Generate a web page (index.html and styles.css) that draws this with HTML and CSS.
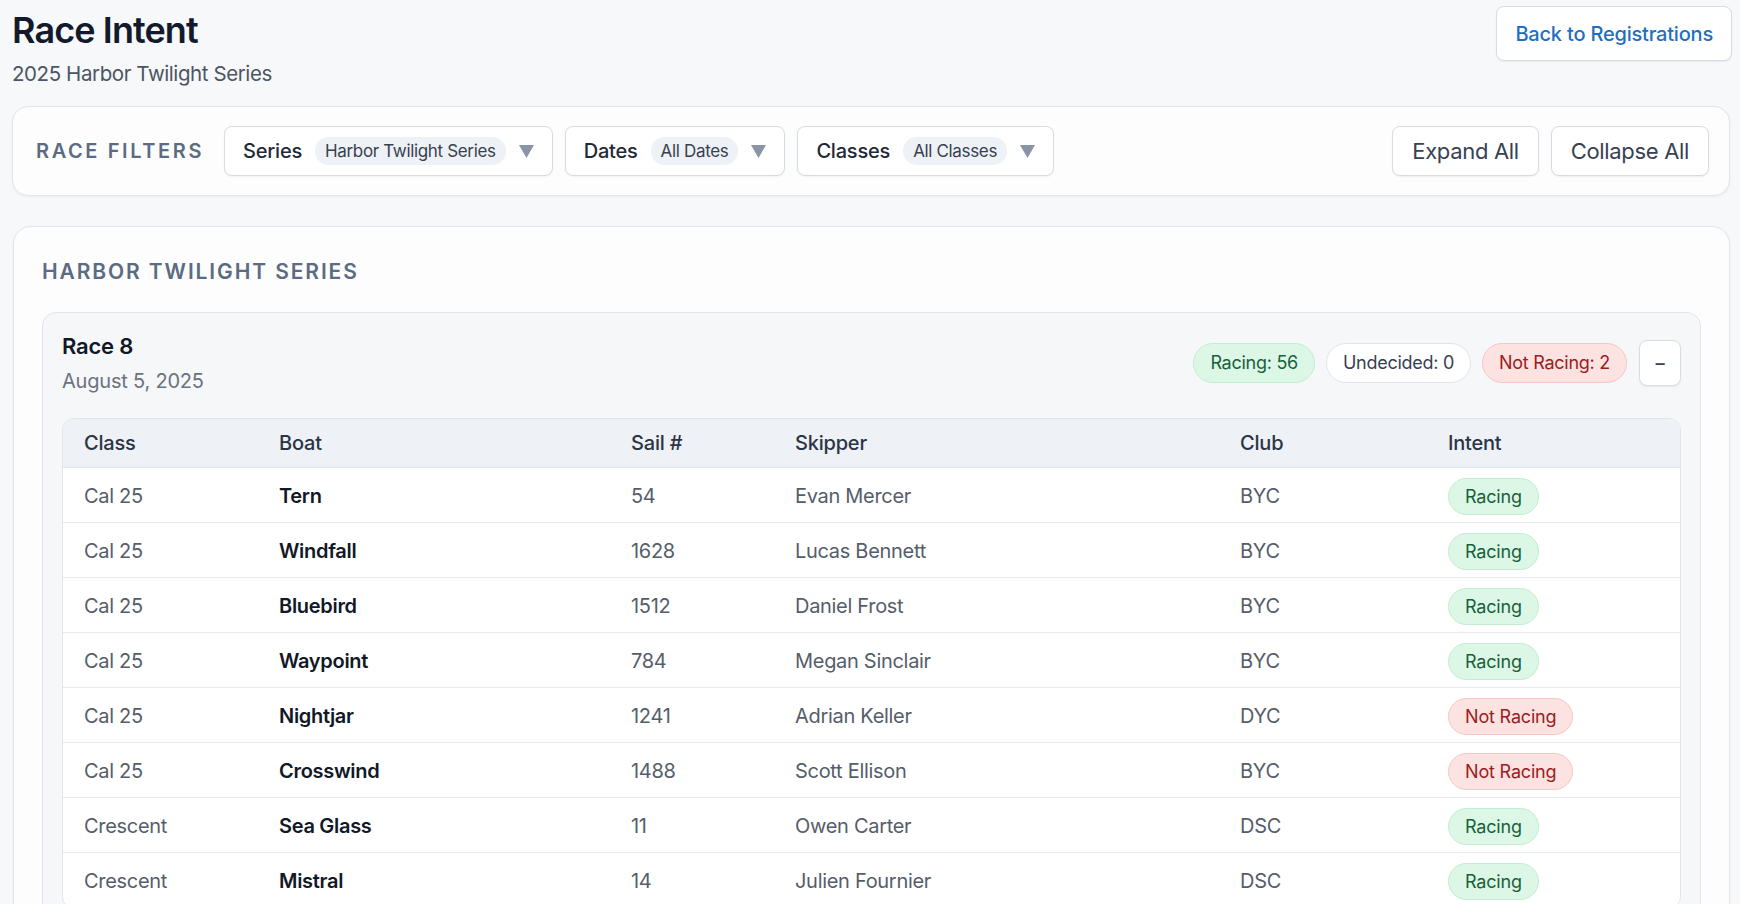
FILE: index.html
```html
<!DOCTYPE html>
<html lang="en">
<head>
  <meta charset="UTF-8">
  <meta name="viewport" content="width=device-width, initial-scale=1.0">
  <title>Race Intent</title>
  <link rel="stylesheet" href="styles.css">
</head>
<body>
  <header class="page-head">
    <div class="page-title">
      <h1>Race Intent</h1>
      <p class="subtitle">2025 Harbor Twilight Series</p>
    </div>
    <button class="btn btn-link">Back to Registrations</button>
  </header>

  <section class="filters">
    <span class="filters-label">Race Filters</span>
    <div class="select">
      <span class="select-label">Series</span>
      <span class="select-value">Harbor Twilight Series</span>
      <svg class="caret" width="15" height="13" viewBox="0 0 15 13"><polygon points="0,0 15,0 7.5,13" /></svg>
    </div>
    <div class="select">
      <span class="select-label">Dates</span>
      <span class="select-value">All Dates</span>
      <svg class="caret" width="15" height="13" viewBox="0 0 15 13"><polygon points="0,0 15,0 7.5,13" /></svg>
    </div>
    <div class="select">
      <span class="select-label">Classes</span>
      <span class="select-value">All Classes</span>
      <svg class="caret" width="15" height="13" viewBox="0 0 15 13"><polygon points="0,0 15,0 7.5,13" /></svg>
    </div>
    <div class="filters-actions">
      <button class="btn btn-plain">Expand All</button>
      <button class="btn btn-plain">Collapse All</button>
    </div>
  </section>

  <section class="series">
    <h2 class="series-title">Harbor Twilight Series</h2>

    <div class="race">
      <div class="race-head">
        <div>
          <div class="race-name">Race 8</div>
          <div class="race-date">August 5, 2025</div>
        </div>
        <div class="race-stats">
          <span class="pill pill-racing">Racing: 56</span>
          <span class="pill pill-undecided">Undecided: 0</span>
          <span class="pill pill-not">Not Racing: 2</span>
          <button class="btn btn-toggle">&minus;</button>
        </div>
      </div>

      <div class="table-wrap">
        <table class="entries">
          <colgroup>
            <col class="c-class">
            <col class="c-boat">
            <col class="c-sail">
            <col class="c-skipper">
            <col class="c-club">
            <col>
          </colgroup>
          <thead>
            <tr><th>Class</th><th>Boat</th><th>Sail #</th><th>Skipper</th><th>Club</th><th>Intent</th></tr>
          </thead>
          <tbody>
            <tr><td>Cal 25</td><td class="boat">Tern</td><td>54</td><td>Evan Mercer</td><td>BYC</td><td><span class="badge badge-racing">Racing</span></td></tr>
            <tr><td>Cal 25</td><td class="boat">Windfall</td><td>1628</td><td>Lucas Bennett</td><td>BYC</td><td><span class="badge badge-racing">Racing</span></td></tr>
            <tr><td>Cal 25</td><td class="boat">Bluebird</td><td>1512</td><td>Daniel Frost</td><td>BYC</td><td><span class="badge badge-racing">Racing</span></td></tr>
            <tr><td>Cal 25</td><td class="boat">Waypoint</td><td>784</td><td>Megan Sinclair</td><td>BYC</td><td><span class="badge badge-racing">Racing</span></td></tr>
            <tr><td>Cal 25</td><td class="boat">Nightjar</td><td>1241</td><td>Adrian Keller</td><td>DYC</td><td><span class="badge badge-not">Not Racing</span></td></tr>
            <tr><td>Cal 25</td><td class="boat">Crosswind</td><td>1488</td><td>Scott Ellison</td><td>BYC</td><td><span class="badge badge-not">Not Racing</span></td></tr>
            <tr><td>Crescent</td><td class="boat">Sea Glass</td><td>11</td><td>Owen Carter</td><td>DSC</td><td><span class="badge badge-racing">Racing</span></td></tr>
            <tr><td>Crescent</td><td class="boat">Mistral</td><td>14</td><td>Julien Fournier</td><td>DSC</td><td><span class="badge badge-racing">Racing</span></td></tr>
          </tbody>
        </table>
      </div>
    </div>
  </section>
</body>
</html>
```

FILE: styles.css
```css
body {
  margin: 0;
  padding: 0 10px 0 12px;
  background: #f7f8fa;
  color: #1f2937;
  font-family: Inter, "Noto Sans", sans-serif;
}

button {
  font-family: inherit;
  cursor: pointer;
}

.page-head {
  display: flex;
  justify-content: space-between;
  align-items: flex-start;
}
.page-title {
  padding-top: 9px;
}
h1 {
  margin: 0;
  font-size: 36px;
  line-height: 42px;
  font-weight: 600;
  letter-spacing: -0.025em;
  color: #121a2b;
}
.subtitle {
  margin: 9px 0 0;
  font-size: 20.5px;
  line-height: 28px;
  color: #4b5563;
  letter-spacing: -0.02em;
}

.btn {
  background: #fff;
  border: 1px solid #d7dce4;
  border-radius: 8px;
  box-shadow: 0 1px 2px rgba(16, 24, 40, 0.06);
}
.btn-link {
  margin: 6px -2px 0 0;
  height: 55px;
  padding: 0 18px;
  font-size: 20px;
  font-weight: 500;
  color: #1f6fbf;
  letter-spacing: -0.01em;
}
.btn-plain {
  height: 50px;
  padding: 0 19px;
  font-size: 22px;
  color: #374151;
  letter-spacing: -0.015em;
}

.filters {
  margin-top: 18px;
  display: flex;
  align-items: center;
  gap: 12px;
  padding: 19px 20px 19px 23px;
  background: #fdfdfe;
  border: 1px solid #e1e5eb;
  border-radius: 16px;
  box-shadow: 0 1px 3px rgba(16, 24, 40, 0.05);
}
.filters-label {
  margin-right: 8px;
  font-size: 20px;
  font-weight: 600;
  letter-spacing: 0.13em;
  text-transform: uppercase;
  color: #5b6b82;
}
.select {
  height: 50px;
  box-sizing: border-box;
  display: flex;
  align-items: center;
  gap: 13px;
  padding: 0 18px;
  background: #fff;
  border: 1px solid #d7dce4;
  border-radius: 8px;
  box-shadow: 0 1px 2px rgba(16, 24, 40, 0.05);
}
.select-label {
  font-size: 20px;
  font-weight: 500;
  color: #1f2937;
  letter-spacing: -0.01em;
}
.select-value {
  height: 28px;
  line-height: 28px;
  padding: 0 10px;
  border-radius: 14px;
  background: #eef1f5;
  font-size: 17px;
  color: #374151;
  letter-spacing: -0.02em;
}
.caret {
  fill: #8a94a6;
}
.filters-actions {
  margin-left: auto;
  display: flex;
  gap: 12px;
}

.series {
  margin: 30px 0 0 1px;
  padding: 32px 28px 28px;
  background: #fdfdfe;
  border: 1px solid #e2e6ec;
  border-radius: 18px;
  box-shadow: 0 1px 3px rgba(16, 24, 40, 0.05);
}
.series-title {
  margin: 0 0 27px;
  font-size: 21px;
  line-height: 26px;
  font-weight: 600;
  letter-spacing: 0.09em;
  text-transform: uppercase;
  color: #5b6b82;
}

.race {
  padding: 19px 19px 19px;
  background: #f6f7f9;
  border: 1px solid #e2e6ec;
  border-radius: 14px;
}
.race-head {
  display: flex;
  justify-content: space-between;
  align-items: center;
  margin-bottom: 24px;
}
.race-name {
  font-size: 22px;
  line-height: 28px;
  font-weight: 600;
  color: #111827;
  letter-spacing: -0.01em;
}
.race-date {
  margin-top: 8px;
  font-size: 20px;
  line-height: 26px;
  color: #6b7280;
  letter-spacing: -0.01em;
}
.race-stats {
  display: flex;
  align-items: center;
  gap: 11px;
}
.pill {
  height: 40px;
  box-sizing: border-box;
  line-height: 38px;
  padding: 0 16px;
  border-radius: 20px;
  border: 1px solid transparent;
  font-size: 18px;
  letter-spacing: -0.015em;
}
.pill-racing {
  background: #ddf7e7;
  border-color: #c2edd2;
  color: #17613a;
}
.pill-undecided {
  background: #fff;
  border-color: #e1e5eb;
  color: #374151;
}
.pill-not {
  background: #fde2e2;
  border-color: #f7c6c6;
  color: #9b1c1c;
}
.btn-toggle {
  width: 42px;
  height: 46px;
  margin-left: 1px;
  padding: 0;
  font-size: 20px;
  color: #374151;
}

.table-wrap {
  background: #fff;
  border: 1px solid #e1e5eb;
  border-radius: 12px;
  overflow: hidden;
}
.entries {
  width: 100%;
  border-collapse: collapse;
  table-layout: fixed;
}
.c-class { width: 195px; }
.c-boat { width: 352px; }
.c-sail { width: 164px; }
.c-skipper { width: 445px; }
.c-club { width: 208px; }
.entries th {
  height: 48px;
  padding: 0 21px;
  text-align: left;
  font-size: 20px;
  font-weight: 500;
  color: #2b3445;
  letter-spacing: -0.01em;
  background: #eef1f5;
  border-bottom: 1px solid #e1e5eb;
}
.entries td {
  height: 52px;
  padding: 2px 21px 0;
  font-size: 20px;
  color: #555d6a;
  letter-spacing: -0.015em;
  border-bottom: 1px solid #e6e9ee;
}
.entries td.boat {
  font-weight: 600;
  color: #111827;
}
.badge {
  display: inline-block;
  height: 37px;
  box-sizing: border-box;
  line-height: 35px;
  padding: 0 16px;
  border-radius: 19px;
  border: 1px solid transparent;
  font-size: 18px;
  letter-spacing: -0.01em;
}
.badge-racing {
  background: #ddf7e7;
  border-color: #c2edd2;
  color: #17613a;
}
.badge-not {
  background: #fde2e2;
  border-color: #f7c6c6;
  color: #9b1c1c;
}
```
